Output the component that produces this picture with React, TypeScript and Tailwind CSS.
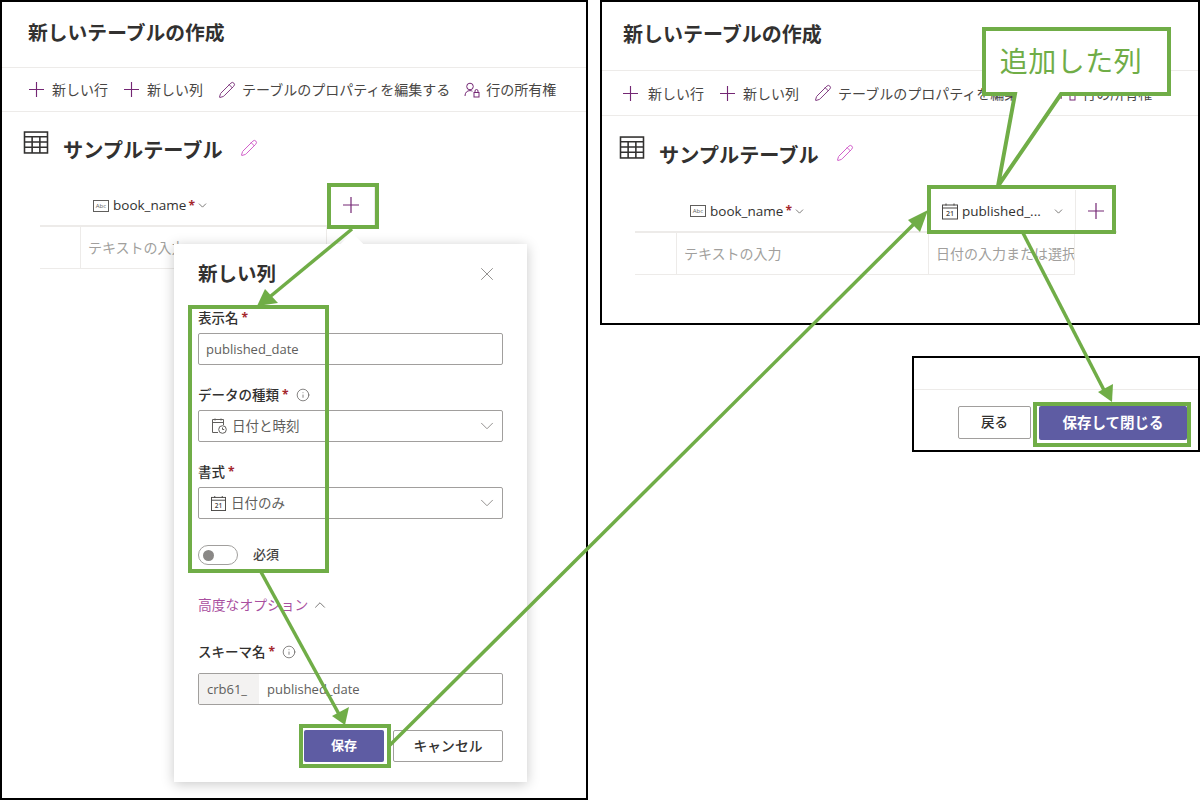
import { ChevronDown, ChevronUp, Info, Pencil, X } from "lucide-react";

const font = { fontFamily: '"Open Sans", "Noto Sans CJK JP", sans-serif' };

function PlusIcon({ className }: { className: string }) {
  return (
    <svg viewBox="0 0 16 16" className={className} fill="none" stroke="#742774" strokeWidth="1.2">
      <path d="M8 0v16M0 8h16" />
    </svg>
  );
}

function TableIcon({ className }: { className: string }) {
  return (
    <svg viewBox="0 0 24 22" className={className} fill="none" stroke="#323130" strokeWidth="1.5">
      <rect x="1" y="1" width="22" height="20" />
      <path d="M1 5.5h22M1 10.5h22M1 15.5h22M8.3 5.5V21M15.7 5.5V21" />
    </svg>
  );
}

function AbcIcon() {
  return (
    <svg viewBox="0 0 16 12" className="h-[12px] w-[16px] shrink-0" fill="none">
      <rect x="0.5" y="0.5" width="15" height="11" stroke="#605e5c" />
      <text x="8" y="7.5" fontSize="6" fill="#605e5c" stroke="none" textAnchor="middle">Abc</text>
    </svg>
  );
}

function CalendarIcon({ className }: { className: string }) {
  return (
    <svg viewBox="0 0 16 16" className={className} fill="none" stroke="#484644">
      <rect x="0.5" y="1.5" width="15" height="14" />
      <path d="M0.5 4.5h15M4 0v2M12 0v2" />
      <text x="8" y="12.5" fontSize="7" fontWeight="600" fill="#484644" stroke="none" textAnchor="middle">21</text>
    </svg>
  );
}

function CalendarClockIcon() {
  return (
    <svg viewBox="0 0 16 16" className="h-4 w-4 shrink-0" fill="none" stroke="#605e5c">
      <path d="M7 14.5H1.5v-13h11V7M1.5 4.5h11M4 0.5v2M10 0.5v2" />
      <circle cx="11.5" cy="11.5" r="3.8" fill="#fff" />
      <path d="M11.5 9.5v2h1.7" />
    </svg>
  );
}

function OwnerIcon() {
  return (
    <svg viewBox="0 0 16 16" className="h-4 w-4 shrink-0" fill="none" stroke="#742774">
      <circle cx="6" cy="4.5" r="3.3" />
      <path d="M1 14c0-3.4 2-5.4 5-5.4 1 0 1.7.2 2.4.6" />
      <rect x="10" y="10.5" width="5" height="4.5" />
      <path d="M11 10.5V9a1.5 1.5 0 0 1 3 0v1.5" />
    </svg>
  );
}

function Toolbar({ className, firstGap }: { className: string; firstGap: string }) {
  return (
    <div className={`flex shrink-0 items-center border-b border-[#edebe9] text-[14px] text-[#484644] ${className}`}>
      <PlusIcon className="h-[15px] w-[15px] shrink-0" />
      <span className={firstGap}>新しい行</span>
      <PlusIcon className="ml-[16px] h-[15px] w-[15px] shrink-0" />
      <span className="ml-[8px]">新しい列</span>
      <Pencil className="ml-[15px] h-[18px] w-[18px] text-[#742774]" strokeWidth={1.2} />
      <span className="ml-[6px]">テーブルのプロパティを編集する</span>
      <span className="ml-[14px]"><OwnerIcon /></span>
      <span className="ml-[6px]">行の所有権</span>
    </div>
  );
}

function HeaderCell({ name }: { name: string }) {
  return (
    <div className="flex items-center pt-[1px]">
      <AbcIcon />
      <span className="ml-[4px] text-[13.5px] font-medium text-[#323130]">{name}</span>
      <span className="ml-[2px] text-[12px] font-bold text-[#a4262c]">*</span>
      <ChevronDown className="ml-[1px] h-[13px] w-[13px] text-[#605e5c]" strokeWidth={1.5} />
    </div>
  );
}

function Panel({ wide, children }: { wide?: boolean; children: React.ReactNode }) {
  return (
    <div className="flex h-full flex-col border-2 border-black bg-white">
      <div className={wide
        ? "flex h-[69px] shrink-0 items-center border-b border-[#edebe9] pb-[2px] pl-[21px] text-[20px] font-bold text-[#323130]"
        : "flex h-[66px] shrink-0 items-center border-b border-[#edebe9] pb-[3px] pl-[26px] text-[19.8px] font-bold text-[#323130]"}>
        新しいテーブルの作成
      </div>
      <Toolbar
        className={wide ? "h-[45px] pl-[21px]" : "h-[44px] pl-[27px]"}
        firstGap={wide ? "ml-[10px]" : "ml-[8px]"}
      />
      <div className={wide ? "flex items-start pl-[17px] pt-[20px]" : "flex items-start pl-[21px] pt-[19px]"}>
        <TableIcon className="h-[23px] w-[26px]" />
        <span className="ml-[14px] mt-[5px] text-[20.2px] font-semibold leading-[28px] text-[#323130]">サンプルテーブル</span>
        <Pencil className="ml-[17px] mt-[8px] h-[18px] w-[18px] text-[#d05ac8]" strokeWidth={1.3} />
      </div>
      {children}
    </div>
  );
}

function Label({ text, info }: { text: string; info?: boolean }) {
  return (
    <div className="flex h-[20px] items-center text-[13.5px] font-medium text-[#323130]">
      {text}
      <span className="ml-[3px] text-[12px] font-bold text-[#a4262c]">*</span>
      {info && <Info className="ml-[7px] h-[14px] w-[14px] text-[#605e5c]" strokeWidth={1.3} />}
    </div>
  );
}

function SelectBox({ icon, text }: { icon: React.ReactNode; text: string }) {
  return (
    <div className="mt-[5px] flex h-[32px] items-center rounded-[2px] border border-[#a19f9d] pl-[12px] pr-[4px] text-[13.5px] text-[#605e5c]">
      {icon}
      <span className="ml-[5px] flex-1">{text}</span>
      <ChevronDown className="h-[22px] w-[22px] text-[#8a8886]" strokeWidth={1} />
    </div>
  );
}

function NewColumnDialog() {
  return (
    <div className="absolute left-[174px] top-[244px] h-[538px] w-[353px] bg-white pl-[24px] pr-[24px] shadow-[0_2px_12px_rgba(0,0,0,0.22)]">
      <div className="absolute left-[170px] top-[-8px] h-[16px] w-[16px] rotate-45 bg-white" />
      <div className="relative flex h-[64px] items-center justify-between pb-[4px]">
        <span className="text-[19.5px] font-bold text-[#323130]">新しい列</span>
        <X className="mr-[5px] h-[22px] w-[22px] text-[#8a8886]" strokeWidth={1} />
      </div>
      <Label text="表示名" />
      <div className="mt-[5px] flex h-[32px] items-center rounded-[2px] border border-[#a19f9d] pl-[7px] pt-[2px] text-[13px] text-[#605e5c]">published_date</div>
      <div className="mt-[20px]"><Label text="データの種類" info /></div>
      <SelectBox icon={<CalendarClockIcon />} text="日付と時刻" />
      <div className="mt-[20px]"><Label text="書式" /></div>
      <SelectBox icon={<CalendarIcon className="h-[15px] w-[15px] shrink-0" />} text="日付のみ" />
      <div className="mt-[26px] flex h-[20px] items-center">
        <div className="flex h-[20px] w-[40px] items-center rounded-full border border-[#a19f9d] pl-[4px]">
          <div className="h-[11px] w-[11px] rounded-full bg-[#8a8886]" />
        </div>
        <span className="ml-[15px] text-[13px] font-medium text-[#484644]">必須</span>
      </div>
      <div className="mt-[30px] flex h-[20px] items-center text-[13.8px] text-[#a94fa0]">
        高度なオプション
        <ChevronUp className="ml-[3px] h-[18px] w-[18px] text-[#605e5c]" strokeWidth={1.1} />
      </div>
      <div className="mt-[27px]"><Label text="スキーマ名" info /></div>
      <div className="mt-[11px] flex h-[32px] items-stretch overflow-hidden rounded-[2px] border border-[#a19f9d] text-[13px] text-[#605e5c]">
        <div className="flex w-[60px] items-center bg-[#f3f2f1] pl-[8px] pt-[2px]">crb61_</div>
        <div className="flex items-center pl-[8px] pt-[2px]">published_date</div>
      </div>
      <div className="mt-[25px] flex justify-end">
        <div className="flex h-[32px] w-[80px] items-center justify-center rounded-[2px] bg-[#5e5ca3] text-[13px] font-bold text-white">保存</div>
        <div className="ml-[9px] flex h-[32px] w-[110px] items-center justify-center rounded-[2px] border border-[#a19f9d] text-[13.8px] font-medium text-[#323130]">キャンセル</div>
      </div>
    </div>
  );
}

const green = "#70ad47";

function Annotations() {
  return (
    <svg className="pointer-events-none absolute left-0 top-0" width="1200" height="800" fill="none">
      <g stroke={green} strokeWidth="4">
        <rect x="329" y="185" width="48" height="42" />
        <rect x="190" y="307" width="137" height="264" />
        <rect x="301" y="726" width="88" height="40" />
        <rect x="929" y="187" width="185" height="45" />
        <rect x="1035" y="404" width="154" height="41" />
      </g>
      <g stroke={green} strokeWidth="3.5">
        <path d="M352 229 266 300" />
        <path d="M261 572 340 716" />
        <path d="M390 745 922 216" />
        <path d="M1023 233 1106 394" />
      </g>
      <g fill={green}>
        <path d="M257 306 278 303 265 289Z" />
        <path d="M345 725 349 707 332 716Z" />
        <path d="M928 210 908 220 920 232Z" />
        <path d="M1112 402 1113 384 1098 392Z" />
      </g>
      <path d="M984 29H1169V94H1061L998 186 1015 94H984Z" fill="#fff" stroke={green} strokeWidth="4" />
    </svg>
  );
}

export default function App() {
  return (
    <div className="relative h-[800px] w-[1200px] overflow-hidden bg-white" style={font}>
      {/* left capture */}
      <div className="absolute left-0 top-0 h-[800px] w-[588px]">
        <Panel>
          <div className="ml-[38px] mt-[21px] w-[335px]">
            <div className="flex h-[42px] border-b-2 border-[#edebe9]">
              <div className="flex w-[287px] items-center pl-[53px]"><HeaderCell name="book_name" /></div>
              <div className="flex w-[48px] items-center justify-center border-r border-[#edebe9]">
                <PlusIcon className="h-[16px] w-[16px]" />
              </div>
            </div>
            <div className="flex h-[42px] border-b border-[#edebe9]">
              <div className="w-[41px] border-r border-[#edebe9]" />
              <div className="flex w-[246px] items-center border-r border-[#edebe9] pl-[7px] text-[14px] text-[#a19f9d]">テキストの入力</div>
            </div>
          </div>
        </Panel>
      </div>

      {/* right capture */}
      <div className="absolute left-[600px] top-0 h-[325px] w-[600px]">
        <Panel wide>
          <div className="ml-[33px] mt-[21px] w-[482px]">
            <div className="flex h-[43px] border-b-2 border-[#edebe9]">
              <div className="flex w-[294px] items-center pl-[55px]"><HeaderCell name="book_name" /></div>
              <div className="flex w-[146px] items-center pl-[13px] pt-[1px]">
                <CalendarIcon className="h-[17px] w-[16px] shrink-0" />
                <span className="ml-[4px] text-[13.5px] font-medium text-[#323130]">published_...</span>
                <ChevronDown className="ml-[11px] h-[13px] w-[13px] text-[#605e5c]" strokeWidth={1.5} />
              </div>
              <div className="flex w-[40px] items-center justify-center border-l border-[#edebe9]">
                <PlusIcon className="h-[16px] w-[16px]" />
              </div>
            </div>
            <div className="flex h-[42px] w-[440px] border-b border-[#edebe9]">
              <div className="w-[42px] border-r border-[#edebe9]" />
              <div className="flex w-[252px] items-center border-r border-[#edebe9] pl-[7px] text-[14px] text-[#a19f9d]">テキストの入力</div>
              <div className="flex w-[146px] items-center overflow-hidden whitespace-nowrap border-r border-[#edebe9] pl-[7px] text-[14px] text-[#a19f9d]">日付の入力または選択</div>
            </div>
          </div>
        </Panel>
      </div>

      {/* footer capture */}
      <div className="absolute left-[912px] top-[356px] flex h-[96px] w-[288px] flex-col border-2 border-black bg-white">
        <div className="h-[32px] border-b border-[#edebe9]" />
        <div className="flex flex-1 items-start justify-end pr-[11px] pt-[16px]">
          <div className="flex h-[33px] w-[73px] items-center justify-center rounded-[2px] border border-[#a19f9d] text-[13.5px] font-medium text-[#323130]">戻る</div>
          <div className="ml-[8px] flex h-[34px] w-[148px] items-center justify-center rounded-[2px] bg-[#5e5ca3] text-[14.5px] font-bold text-white">保存して閉じる</div>
        </div>
      </div>

      <NewColumnDialog />
      <Annotations />
      <div className="absolute left-[984px] top-[31px] flex h-[60px] w-[174px] items-center justify-center text-[28px] tracking-[0.5px] text-[#70ad47]">追加した列</div>
    </div>
  );
}
